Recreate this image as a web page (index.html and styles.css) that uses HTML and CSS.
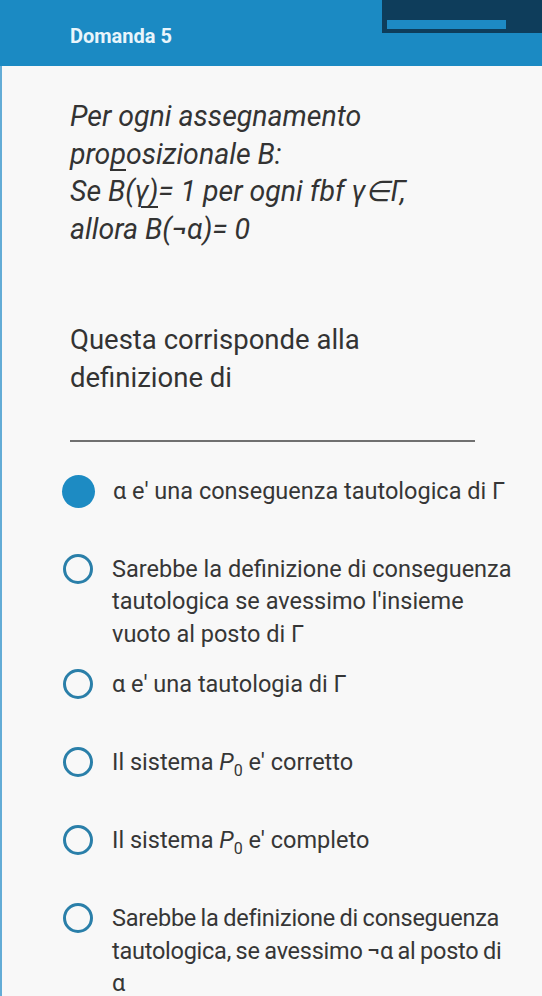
FILE: index.html
```html
<!DOCTYPE html>
<html lang="it">
<head>
<meta charset="utf-8">
<title>Domanda 5</title>
<link rel="stylesheet" href="styles.css">
</head>
<body>
<header class="topbar">
  <h1 class="title">Domanda 5</h1>
  <div class="timer">
    <span class="timer-text">00:00:15</span>
    <span class="timer-bar"></span>
  </div>
</header>
<main class="content">
  <p class="statement">Per ogni assegnamento<br>pro<span class="mark">p</span>osizionale B:<br>Se B(<span class="mark mark-g">γ)</span>= 1 per ogni fbf γ∈Γ,<br>allora B(¬α)= 0</p>
  <p class="prompt">Questa corrisponde alla<br>definizione di</p>
  <hr class="rule">
  <ul class="options">
    <li class="option"><span class="radio checked"></span><span class="label">α e' una conseguenza tautologica di Γ</span></li>
    <li class="option"><span class="radio"></span><span class="label">Sarebbe la definizione di conseguenza tautologica se avessimo l'insieme vuoto al posto di Γ</span></li>
    <li class="option"><span class="radio"></span><span class="label">α e' una tautologia di Γ</span></li>
    <li class="option"><span class="radio"></span><span class="label">Il sistema <i class="sym">P</i><sub class="sub">0</sub> e' corretto</span></li>
    <li class="option"><span class="radio"></span><span class="label">Il sistema <i class="sym">P</i><sub class="sub">0</sub> e' completo</span></li>
    <li class="option"><span class="radio"></span><span class="label label-tight">Sarebbe la definizione di conseguenza tautologica, se avessimo ¬α al posto di α</span></li>
  </ul>
</main>
</body>
</html>
```

FILE: styles.css
```css
html, body {
  margin: 0;
  padding: 0;
}
body {
  background: #f8f8f8;
  font-family: Roboto, "Noto Sans", "Liberation Sans", sans-serif;
  color: #353535;
}
.topbar {
  position: relative;
  height: 66px;
  background: #1b8ac3;
  padding: 22px 0 0 70px;
  box-sizing: border-box;
}
.title {
  margin: 0;
  font-size: 20px;
  line-height: 28px;
  font-weight: 700;
  color: #e9f5fb;
}
.timer {
  position: absolute;
  top: 0;
  right: 0;
  width: 160px;
  height: 33px;
  background: #0e3d5b;
  overflow: hidden;
}
.timer-text {
  position: absolute;
  top: -18px;
  left: 54px;
  font-size: 22px;
  line-height: 22px;
  font-weight: 700;
  color: #ffffff;
  letter-spacing: 1px;
}
.timer-bar {
  position: absolute;
  left: 5px;
  top: 20px;
  width: 119px;
  height: 9px;
  background: #1d8ac4;
}
.content {
  border-left: 2px solid #63acd6;
  padding: 32px 67px 40px 68px;
  min-height: 930px;
  box-sizing: border-box;
}
.statement {
  margin: 0;
  font-size: 28.5px;
  line-height: 37.5px;
  font-style: italic;
  color: #333;
}
.mark {
  background: linear-gradient(#333, #333) no-repeat left bottom / 17px 2px;
}
.mark-g {
  background-position: 6px bottom;
}
.prompt {
  margin: 73px 0 0;
  font-size: 27.5px;
  line-height: 37.5px;
  color: #333;
}
.rule {
  margin: 44px 0 0;
  border: 0;
  height: 1.5px;
  background: #707070;
}
.options {
  list-style: none;
  margin: 33px -40px 0 -8px;
  padding: 0;
}
.option {
  display: flex;
  align-items: flex-start;
  min-height: 60px;
  margin-bottom: 18px;
}
.radio {
  flex: none;
  width: 30px;
  height: 30px;
  margin: 1px 19px 0 1px;
  border: 3px solid #2a7fa9;
  border-radius: 50%;
  box-sizing: border-box;
}
.radio.checked {
  width: 33px;
  height: 33px;
  margin: 0 18px 0 0;
  border: 0;
  background: #1d8bc3;
}
.label {
  font-size: 23.5px;
  line-height: 32.5px;
  color: #363636;
  max-width: 406px;
}
.label-tight {
  max-width: 410px;
  letter-spacing: -0.25px;
  word-spacing: -1px;
}
.sym {
  font-style: italic;
}
.sub {
  font-size: 16px;
  line-height: 0;
  vertical-align: -6px;
}
```
